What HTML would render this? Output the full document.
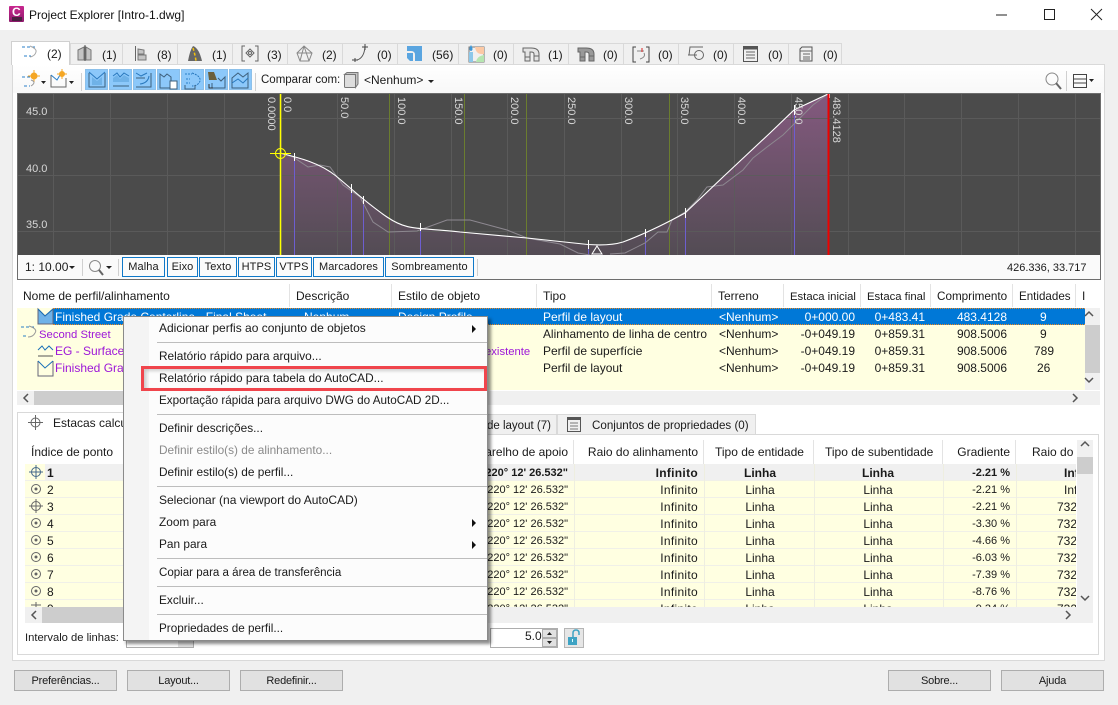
<!DOCTYPE html>
<html><head><meta charset="utf-8"><title>Project Explorer</title>
<style>
html,body{margin:0;padding:0}
body{width:1118px;height:705px;overflow:hidden;background:#f0f0f0;position:relative;font:12px "Liberation Sans",sans-serif;color:#1a1a1a}
.a{position:absolute}
.t{position:absolute;white-space:nowrap;line-height:16px}
.tab{position:absolute;top:43px;height:21px;background:#f0f0f0;border:1px solid #d9d9d9;border-bottom:none;box-sizing:border-box}
.tb{position:absolute;top:69px;width:23px;height:21px;background:#8cc8fa;border:1px solid #8cc0ea;box-sizing:border-box}
.bb{position:absolute;top:257px;height:20px;box-sizing:border-box;border:1px solid #0f78c8;text-align:center;line-height:19px;background:#fbfbfb;font-size:11px;letter-spacing:.1px}
.hs{position:absolute;width:1px;background:#e3e3e3}
.r{position:absolute;left:25px;width:1051px;height:16px;background:#ffffe1;border-bottom:1px solid #f0f0e8;overflow:hidden}
.r .t{top:1px}
.c0{left:22px}
.c1{right:508px;font-size:11px}
.c2{right:378px;letter-spacing:.3px}
.c3{left:693px;width:84px;text-align:center}
.c4{left:793px;width:120px;text-align:center}
.c5{right:66px;font-size:11px}
.c6{left:1039px}
.c7{left:1032px}
.vs{position:absolute;width:1px;background:#eeeee0;top:464px;height:143px}
.btn{position:absolute;top:670px;height:21px;width:103px;box-sizing:border-box;background:#e1e1e1;border:1px solid #adadad;text-align:center;line-height:21px;font-size:11px;letter-spacing:-.2px}
.m{position:absolute;left:35px;white-space:nowrap;line-height:16px;font-size:11.85px}
.sep{position:absolute;left:33px;width:330px;height:1px;background:#bdbdbd}
.rw{position:absolute;white-space:nowrap;line-height:16px}
.h1{font-size:11.3px}
</style></head><body>

<!-- title bar -->
<div class="a" style="left:0;top:0;width:1118px;height:30px;background:#fff"></div>
<div class="a" style="left:9px;top:6px;width:15px;height:16px;background:linear-gradient(#c8268e,#8d1a6c);border-radius:1px"></div>
<div class="t" style="left:12px;top:4px;color:#fff;font-weight:bold;font-size:12px">C</div>
<div class="a" style="left:12px;top:17px;width:10px;height:4px;background:#4a2040"></div>
<div class="t" style="left:29px;top:7px;font-size:12px;color:#111">Project Explorer [Intro-1.dwg]</div>
<svg class="a" style="left:990px;top:5px" width="120" height="20" fill="none" stroke="#222" stroke-width="1" shape-rendering="crispEdges">
<path d="M6 10H17"/><rect x="54.5" y="4.5" width="10" height="10"/><path d="M101 4L112 15M112 4L101 15" shape-rendering="auto"/></svg>

<!-- main panel -->
<div class="a" style="left:12px;top:64px;width:1093px;height:597px;box-sizing:border-box;background:#fff;border:1px solid #d9d9d9"></div>
<div class="a" style="left:13px;top:65px;width:1091px;height:28px;background:linear-gradient(#fff,#f8f8f8)"></div>

<!-- tabs -->
<div class="tab" style="left:70px;width:53px"></div><div class="tab" style="left:122px;width:56px"></div><div class="tab" style="left:177px;width:56px"></div><div class="tab" style="left:232px;width:56px"></div><div class="tab" style="left:287px;width:56px"></div><div class="tab" style="left:342px;width:56px"></div><div class="tab" style="left:397px;width:62px"></div><div class="tab" style="left:458px;width:56px"></div><div class="tab" style="left:513px;width:56px"></div><div class="tab" style="left:568px;width:56px"></div><div class="tab" style="left:623px;width:56px"></div><div class="tab" style="left:678px;width:56px"></div><div class="tab" style="left:733px;width:56px"></div><div class="tab" style="left:788px;width:54px"></div>
<div class="tab" style="left:11px;top:41px;width:59px;height:24px;background:#fff;border-color:#d0d0d0"></div>
<div class="t" style="left:47px;top:46px">(2)</div><div class="t" style="left:102px;top:47px">(1)</div><div class="t" style="left:157px;top:47px">(8)</div><div class="t" style="left:212px;top:47px">(1)</div><div class="t" style="left:267px;top:47px">(3)</div><div class="t" style="left:322px;top:47px">(2)</div><div class="t" style="left:377px;top:47px">(0)</div><div class="t" style="left:432px;top:47px">(56)</div><div class="t" style="left:493px;top:47px">(0)</div><div class="t" style="left:548px;top:47px">(1)</div><div class="t" style="left:603px;top:47px">(0)</div><div class="t" style="left:658px;top:47px">(0)</div><div class="t" style="left:713px;top:47px">(0)</div><div class="t" style="left:768px;top:47px">(0)</div><div class="t" style="left:823px;top:47px">(0)</div>

<svg class="a" style="left:0;top:40px" width="860" height="26" fill="none" stroke="#666" stroke-width="1">
<!-- 1 alignment -->
<path d="M22 7H36" stroke="#2a7fc8" stroke-dasharray="3 2"/><path d="M24 16H31" stroke="#2a7fc8" stroke-dasharray="3 2"/><path d="M30 6Q37 9 36 12Q35 16 30 17" stroke="#aaa"/>
<!-- 2 sites -->
<path d="M78 10L84 7V20H78ZM86 7L91 10V20H86Z" fill="#c4c4c4" stroke="#777"/><path d="M85 5V21" stroke="#555"/>
<!-- 3 -->
<path d="M135.500 6V21" stroke="#666"/><path d="M138 9L144 10V14H138ZM138 15H146V20H138Z" fill="#c4c4c4" stroke="#777"/>
<!-- 4 road -->
<path d="M188 21Q190 10 193 6Q199 8 202 21Z" fill="#666" stroke="none"/><path d="M193 8Q195 14 196 21" stroke="#f4c20d" stroke-dasharray="3 2" stroke-width="1.500"/>
<!-- 5 -->
<path d="M245 6H242V21H245M255 6H258V21H255"/><path d="M250 9L254 13L250 17L246 13Z"/><circle cx="250" cy="13" r="1.500"/>
<!-- 6 -->
<path d="M304 6L312 13L309 21H300L297 13ZM297 13H312M304 6L300 21M304 6L309 21" stroke="#888"/>
<!-- 7 -->
<path d="M357 20Q364 18 365 7" stroke="#555"/><path d="M352 20H358M355 18V22M362 7H368M365 4V10" stroke="#444"/>
<!-- 8 parcel -->
<path d="M407 6H422V21H415V15Q415 11 411 11H407Z" fill="#5aa5e0" stroke="none"/><path d="M407 13H413V21H410L407 18Z" fill="#5aa5e0" stroke="none"/>
<!-- 9 -->
<path d="M469 7H484V22H469Z" stroke="#777"/><path d="M475 7H484V14Q476 15 475 7Z" fill="#fcc9a5" stroke="none"/><path d="M476 22Q477 16 484 15V22Z" fill="#b6e6b0" stroke="none"/><path d="M469 12H473V22H469Z" fill="#8cc8ea" stroke="none"/><path d="M471 5Q468 10 471 11Q474 10 471 5Z" fill="#3c96d6" stroke="none"/>
<!-- 10 pipes -->
<path d="M523 8H531Q539 8 539 14V21H534V14Q534 12 531 12H530V21H525V12H523Z" fill="#e4e4e4"/><path d="M525 17H530M534 16H539"/>
<!-- 11 pipes dark -->
<path d="M578 8H586Q594 8 594 14V21H589V14Q589 12 586 12H585V21H580V12H578Z" fill="#999"/><path d="M580 17H585M589 16H594"/>
<!-- 12 -->
<path d="M636 7H633V22H636M646 7H649V22H646" stroke="#444"/><path d="M637 11H644" stroke="#888"/><path d="M642 8V12" stroke="#d22"/><path d="M644 13Q646 17 640 19" stroke="#888"/>
<!-- 13 -->
<path d="M689 15L690 7H703" stroke="#666"/><path d="M688 15H697" stroke="#666"/><circle cx="699" cy="15" r="4.500"/>
<!-- 14 -->
<rect x="743.500" y="6.500" width="14" height="15" stroke="#555"/><path d="M743 8H758" stroke="#555" stroke-width="3"/><path d="M746 12H755M746 15H755M746 18H755"/>
<!-- 15 -->
<path d="M800 9L802 7H812V21H800Z" stroke="#555"/><path d="M800 11H812M803 14H810M803 17H810M803 19H810"/>
</svg>

<!-- toolbar 1 -->
<div class="tb" style="left:85px"></div><div class="tb" style="left:109px"></div><div class="tb" style="left:133px"></div><div class="tb" style="left:157px"></div><div class="tb" style="left:181px"></div><div class="tb" style="left:205px"></div><div class="tb" style="left:229px"></div>
<svg class="a" style="left:0;top:66px" width="460" height="27" fill="none" stroke="#555">
<path d="M22 11H30M24 20H30" stroke="#2a7fc8" stroke-dasharray="3 2"/><circle cx="34" cy="10" r="3" fill="#f5a623" stroke="#f5a623"/><path d="M34 4V16M28 10H40" stroke="#f5a623"/><path d="M31 14Q37 16 31 20" stroke="#999"/>
<path d="M41 15H46L43.500 18Z" fill="#222" stroke="none"/>
<path d="M51 9V21H66V12" stroke="#666"/><path d="M51 9L57 14L60 9" stroke="#2a7fc8"/><circle cx="62" cy="8" r="2.500" fill="#f5a623" stroke="#f5a623"/><path d="M62 3V13M57 8H67" stroke="#f5a623"/>
<path d="M69 15H74L71.500 18Z" fill="#222" stroke="none"/>
<path d="M81.500 7V25M255.500 7V25" stroke="#d0d0d0"/>
<path d="M89 7V21H105V7" stroke="#3d5f7c"/><path d="M89 6L97 13L105 6" stroke="#2a79be"/><path d="M92 11L97 15L102 11V19H92Z" fill="#6fb2e8" stroke="none"/>
<path d="M113 10L117 7L120 11L124 7L129 10" stroke="#2a79be"/><path d="M113 12L117 9L120 13L124 9L129 12V16H113Z" fill="#6fb2e8" stroke="none"/><path d="M113 20H129" stroke="#3d5f7c"/>
<path d="M136 7L141 10L147 7" stroke="#2a79be"/><path d="M151 7V21H136" stroke="#3d5f7c"/><path d="M140 18Q148 17 149 10" stroke="#2a79be"/><path d="M136 12H145" stroke="#3d5f7c"/>
<path d="M160 8L164 11L167 8L171 11V22H160Z" stroke="#3d5f7c"/><path d="M170 15H177V23H170Z" fill="#fff" stroke="#3d5f7c"/>
<path d="M185 8H192M186 13H190M186 17H190" stroke="#2a7fc8" stroke-dasharray="2 1"/><path d="M192 7Q201 10 200 15Q198 20 192 20" stroke="#2a79be" stroke-dasharray="2 1"/><path d="M185 19V23H195V19" stroke="#3d5f7c"/>
<path d="M208 6H214L217 14H209Z" fill="#6b5f3c" stroke="none"/><path d="M218 12L221 15L225 11V22H212V17" stroke="#3d5f7c"/><path d="M209 18V22H213" stroke="#333"/>
<path d="M232 12L238 7L243 11L248 7V22H232Z" stroke="#3d5f7c"/><path d="M232 17L238 13L243 17L248 12" stroke="#2a79be"/>
<rect x="344.500" y="8.500" width="11" height="13" rx="1" fill="#ddd" stroke="#777"/><path d="M347 6.500H358V18L355.500 21.500V8.500H344.500Z" fill="#c4c4c4" stroke="#777"/>
<path d="M428 14H434L431 17Z" fill="#222" stroke="none"/>
</svg>
<div class="t" style="left:261px;top:72px;font-size:11.500px">Comparar com:</div>
<div class="t" style="left:364px;top:72px">&lt;Nenhum&gt;</div>
<svg class="a" style="left:1040px;top:70px" width="60" height="22" fill="none" stroke="#777">
<circle cx="12" cy="9" r="6" stroke="#888"/><path d="M16 13L21 19" stroke="#666" stroke-width="2"/><path d="M26.500 1V21" stroke="#d0d0d0"/>
<rect x="33.500" y="4.500" width="13" height="13" stroke="#444"/><path d="M33 9H47M33 13H47" stroke="#444"/><path d="M49 9H54L51.500 12Z" fill="#222" stroke="none"/></svg>

<!-- graph -->
<div class="a" style="left:17px;top:93px;width:1084px;height:187px;box-sizing:border-box;border:1px solid #6d6d6d;background:#fafafa"></div>
<svg class="a" style="left:18px;top:94px" width="1082" height="161" viewBox="18 94 1082 161">
<defs><linearGradient id="g" gradientUnits="userSpaceOnUse" x1="0" y1="94" x2="0" y2="255"><stop offset="0" stop-color="#84597f"/><stop offset="1" stop-color="#534c54"/></linearGradient></defs>
<rect x="18" y="94" width="1082" height="161" fill="#4b4b4b"/>
<path fill="url(#g)" d="M280 153C300 158 320 163 336 176S365 202 387 217S420 227 460 232L527 238L588 244.500Q610 246 623 242Q650 232 685 213L723 177L770 133L794 110L828 94V255H280Z"/>
<g stroke="#5c5c5c" stroke-width="1" shape-rendering="crispEdges" fill="none" opacity=".9">
<path d="M53.500 94V255M110.500 94V255M167.500 94V255M224.500 94V255M281.500 94V255M337.500 94V255M394.500 94V255M451.500 94V255M507.500 94V255M564.500 94V255M621.500 94V255M677.500 94V255M734.500 94V255M791.500 94V255M848.500 94V255M904.500 94V255M961.500 94V255M1018.500 94V255M1075.500 94V255"/>
<path d="M18 118.500H1100M18 175.500H1100M18 231.500H1100"/></g>
<g stroke="#6b7d2f" stroke-width="1" shape-rendering="crispEdges"><path d="M389.500 94V255M464.500 94V255M526.500 94V255M669.500 94V255"/></g>
<g stroke="#6d5ed0" stroke-width="1" shape-rendering="crispEdges"><path d="M294.500 157V255M351.500 188V255M363.500 200V255M420.500 227V255M588.500 244V255M645.500 233V255M685.500 213V255M794.500 110V255"/></g>
<path fill="none" stroke="#8d8890" d="M280 153L293 157L308 167L320 165L330 167L343 185L360 197L373 222L388 232L417 231L447 220L470 220L507 230L527 238L560 244L578 253L590 255M610 254L625 253L645 243L658 232L667 232L672 220L685 212L697 200L707 187L723 185L743 170L753 158L767 147L783 135L795 123L813 105L828 94"/>
<path fill="none" stroke="#fff" stroke-width="1.100" d="M280 153C300 158 320 163 336 176S365 202 387 217S420 227 460 232L527 238L588 244.500Q610 246 623 242Q650 232 685 213L723 177L770 133L794 110L828 94"/>
<path stroke="#fff" fill="none" shape-rendering="crispEdges" d="M294.500 153V161M351.500 184V193M363.500 196V204M420.500 223V231M588.500 240V249M645.500 229V237M685.500 208V218M794.500 105V115M829.500 94V98"/>
<path d="M597 246L602 254H592Z" fill="none" stroke="#fff"/>
<path d="M280.500 94V255" stroke="#ffff00" stroke-width="1.500"/>
<path d="M828.500 94V255" stroke="#f00000" stroke-width="2"/>
<circle cx="280.500" cy="153.500" r="5" fill="none" stroke="#ffff00"/><path d="M270 153.500H291" stroke="#ffff00"/>
<g fill="#d8d8d8" font-family="'Liberation Sans',sans-serif" font-size="11">
<text x="26" y="115">45.0</text><text x="26" y="172">40.0</text><text x="26" y="228">35.0</text>
<text transform="translate(268,97) rotate(90)">0.0000</text>
<text transform="translate(284,97) rotate(90)">0.0</text>
<text transform="translate(341,97) rotate(90)">50.0</text>
<text transform="translate(398,97) rotate(90)">100.0</text>
<text transform="translate(455,97) rotate(90)">150.0</text>
<text transform="translate(511,97) rotate(90)">200.0</text>
<text transform="translate(568,97) rotate(90)">250.0</text>
<text transform="translate(625,97) rotate(90)">300.0</text>
<text transform="translate(681,97) rotate(90)">350.0</text>
<text transform="translate(738,97) rotate(90)">400.0</text>
<text transform="translate(795,97) rotate(90)">450.0</text>
<text transform="translate(833,97) rotate(90)">483.4128</text>
</g></svg>

<!-- scale toolbar -->
<div class="t" style="left:25px;top:259px">1: 10.00</div>
<svg class="a" style="left:60px;top:256px" width="70" height="23" fill="none" stroke="#888">
<path d="M9 10H15L12 13Z" fill="#222" stroke="none"/><path d="M22.500 3V20M58.500 3V20" stroke="#d0d0d0"/>
<circle cx="35" cy="10" r="5.500"/><path d="M39 14L43 19" stroke="#666" stroke-width="2"/><path d="M46 10H52L49 13Z" fill="#222" stroke="none"/></svg>
<div class="bb" style="left:122px;width:43px">Malha</div><div class="bb" style="left:167px;width:31px">Eixo</div><div class="bb" style="left:199px;width:38px">Texto</div><div class="bb" style="left:238px;width:37px">HTPS</div><div class="bb" style="left:276px;width:36px">VTPS</div><div class="bb" style="left:313px;width:71px">Marcadores</div><div class="bb" style="left:385px;width:89px">Sombreamento</div>
<div class="a" style="left:477px;top:259px;width:1px;height:17px;background:#d0d0d0"></div>
<div class="t" style="left:1007px;top:260px;font-size:11px">426.336, 33.717</div>

<!-- table 1 header -->
<div class="t" style="left:23px;top:288px">Nome de perfil/alinhamento</div>
<div class="t" style="left:296px;top:288px">Descrição</div>
<div class="t" style="left:398px;top:288px">Estilo de objeto</div>
<div class="t" style="left:543px;top:288px">Tipo</div>
<div class="t" style="left:718px;top:288px">Terreno</div>
<div class="t h1" style="left:790px;top:289px">Estaca inicial</div>
<div class="t h1" style="left:867px;top:289px">Estaca final</div>
<div class="t" style="left:937px;top:289px;font-size:11.7px">Comprimento</div>
<div class="t" style="left:1019px;top:289px;font-size:11.6px">Entidades</div>
<div class="t" style="left:1082px;top:288px">I</div>
<div class="hs" style="left:289px;top:284px;height:23px"></div><div class="hs" style="left:391px;top:284px;height:23px"></div><div class="hs" style="left:536px;top:284px;height:23px"></div><div class="hs" style="left:711px;top:284px;height:23px"></div><div class="hs" style="left:783px;top:284px;height:23px"></div><div class="hs" style="left:860px;top:284px;height:23px"></div><div class="hs" style="left:930px;top:284px;height:23px"></div><div class="hs" style="left:1012px;top:284px;height:23px"></div><div class="hs" style="left:1075px;top:284px;height:23px"></div>

<div class="a" style="left:17px;top:308px;width:1068px;height:82px;background:#ffffe1"></div>
<div class="a" style="left:53px;top:308px;width:1032px;height:17px;box-sizing:border-box;background:#0078d7;border-top:1px dotted #f08a20;border-bottom:1px dotted #f08a20"></div>
<svg class="a" style="left:20px;top:306px" width="40" height="76" fill="none">
<path d="M18 3V18H33V3L25 10Z" fill="#6fb2e8" stroke="#667"/><path d="M18 3L25 10L33 3" stroke="#1a70b8"/>
<path d="M1 21H15M3 30H8" stroke="#2a7fc8" stroke-dasharray="3 2"/><path d="M9 20Q18 23 15 27Q13 31 8 31" stroke="#999"/>
<path d="M18 44L22 40L25 44L29 40L33 44" stroke="#1a70b8"/><path d="M18 50H33" stroke="#555"/>
<path d="M18 55V70H33V55" stroke="#667"/><path d="M18 55L25 62L33 55" stroke="#1a70b8"/>
</svg>
<div class="rw" style="left:55px;top:309px;color:#fff">Finished Grade Centerline - Final Sheet</div>
<div class="rw" style="left:304px;top:309px;color:#fff">Nenhum</div>
<div class="rw" style="left:398px;top:309px;color:#fff">Design Profile</div>
<div class="rw" style="left:543px;top:309px;color:#fff">Perfil de layout</div>
<div class="rw" style="left:719px;top:309px;color:#fff">&lt;Nenhum&gt;</div>
<div class="rw" style="right:263px;top:309px;color:#fff">0+000.00</div>
<div class="rw" style="right:193px;top:309px;color:#fff">0+483.41</div>
<div class="rw" style="right:111px;top:309px;color:#fff">483.4128</div>
<div class="rw" style="left:1040px;top:309px;color:#fff">9</div>

<div class="rw" style="left:39px;top:327px;color:#9d17d8;font-size:11.3px">Second Street</div>
<div class="rw" style="left:543px;top:326px;font-size:11.9px">Alinhamento de linha de centro</div>
<div class="rw" style="left:719px;top:326px">&lt;Nenhum&gt;</div>
<div class="rw" style="right:263px;top:326px">-0+049.19</div>
<div class="rw" style="right:193px;top:326px">0+859.31</div>
<div class="rw" style="right:111px;top:326px">908.5006</div>
<div class="rw" style="left:1040px;top:326px">9</div>

<div class="rw" style="left:55px;top:343px;color:#9d17d8">EG - Surface (1)</div>
<div class="rw" style="left:485px;top:344px;color:#9d17d8;font-size:11.3px">existente</div>
<div class="rw" style="left:543px;top:343px">Perfil de superfície</div>
<div class="rw" style="left:719px;top:343px">&lt;Nenhum&gt;</div>
<div class="rw" style="right:263px;top:343px">-0+049.19</div>
<div class="rw" style="right:193px;top:343px">0+859.31</div>
<div class="rw" style="right:111px;top:343px">908.5006</div>
<div class="rw" style="left:1034px;top:343px">789</div>

<div class="rw" style="left:55px;top:360px;color:#9d17d8">Finished Grade</div>
<div class="rw" style="left:543px;top:360px">Perfil de layout</div>
<div class="rw" style="left:719px;top:360px">&lt;Nenhum&gt;</div>
<div class="rw" style="right:263px;top:360px">-0+049.19</div>
<div class="rw" style="right:193px;top:360px">0+859.31</div>
<div class="rw" style="right:111px;top:360px">908.5006</div>
<div class="rw" style="left:1037px;top:360px">26</div>

<!-- scrollbars table 1 -->
<div class="a" style="left:1085px;top:308px;width:15px;height:82px;background:#f0f0f0"></div>
<div class="a" style="left:1085px;top:325px;width:15px;height:48px;background:#cdcdcd"></div>
<div class="a" style="left:17px;top:391px;width:1083px;height:14px;background:#f0f0f0"></div>
<div class="a" style="left:34px;top:391px;width:300px;height:14px;background:#cdcdcd"></div>
<svg class="a" style="left:17px;top:310px" width="1083" height="96" fill="none" stroke="#555" stroke-width="1.500">
<path d="M1068 6L1072 2L1076 6M1068 68L1072 72L1076 68M11 84L7 88L11 92M1056 84L1060 88L1056 92"/></svg>

<!-- lower panel -->
<div class="a" style="left:17px;top:434px;width:1082px;height:221px;box-sizing:border-box;background:#fff;border:1px solid #d9d9d9"></div>
<div class="a" style="left:17px;top:412px;width:110px;height:23px;background:#fff;box-sizing:border-box;border:1px solid #d9d9d9;border-bottom:none"></div>
<div class="a" style="left:400px;top:414px;width:157px;height:20px;background:#f0f0f0;box-sizing:border-box;border:1px solid #d9d9d9;border-bottom:none"></div>
<div class="a" style="left:557px;top:414px;width:199px;height:20px;background:#f0f0f0;box-sizing:border-box;border:1px solid #d9d9d9;border-bottom:none"></div>
<svg class="a" style="left:25px;top:413px" width="20" height="20" fill="none" stroke="#666"><circle cx="10.500" cy="9.500" r="4.500"/><path d="M10.500 2V17M3 9.500H18"/></svg>
<div class="t" style="left:53px;top:415px">Estacas calculadas</div>
<div class="t" style="left:487px;top:418px;font-size:11.5px">de layout (7)</div>
<svg class="a" style="left:566px;top:416px" width="16" height="16" fill="none" stroke="#555"><rect x="1.500" y="1.500" width="13" height="14"/><path d="M1 3H15" stroke-width="2"/><path d="M4 7H12M4 10H12M4 13H12" stroke="#777"/></svg>
<div class="t" style="left:592px;top:418px;font-size:11.6px">Conjuntos de propriedades (0)</div>

<!-- lower table header -->
<div class="t" style="left:31px;top:444px">Índice de ponto</div>
<div class="t" style="right:550px;top:444px">Aparelho de apoio</div>
<div class="t" style="right:420px;top:444px">Raio do alinhamento</div>
<div class="t" style="left:715px;top:444px">Tipo de entidade</div>
<div class="t" style="left:825px;top:444px">Tipo de subentidade</div>
<div class="t" style="right:108px;top:444px">Gradiente</div>
<div class="a" style="left:1020px;top:444px;width:56px;height:16px;overflow:hidden;line-height:16px;white-space:nowrap;padding-left:12px;box-sizing:border-box">Raio do perfil</div>
<div class="hs" style="left:573px;top:440px;height:24px"></div><div class="hs" style="left:703px;top:440px;height:24px"></div><div class="hs" style="left:813px;top:440px;height:24px"></div><div class="hs" style="left:942px;top:440px;height:24px"></div><div class="hs" style="left:1015px;top:440px;height:24px"></div>

<!-- lower rows -->
<div class="r" style="top:464px;background:#f0f0f0;font-weight:bold;height:16px"><div class="a" style="left:0;top:0;width:20px;height:17px;background:#ffffe1"></div><div class="t c0">1</div><div class="t c1">220° 12' 26.532"</div><div class="t c2">Infinito</div><div class="t c3">Linha</div><div class="t c4">Linha</div><div class="t c5">-2.21 %</div><div class="t c6">Infinito</div></div>
<div class="r" style="top:481px"><div class="t c0">2</div><div class="t c1">220° 12' 26.532"</div><div class="t c2">Infinito</div><div class="t c3">Linha</div><div class="t c4">Linha</div><div class="t c5">-2.21 %</div><div class="t c6">Infinito</div></div>
<div class="r" style="top:498px"><div class="t c0">3</div><div class="t c1">220° 12' 26.532"</div><div class="t c2">Infinito</div><div class="t c3">Linha</div><div class="t c4">Linha</div><div class="t c5">-2.21 %</div><div class="t c7">732.000</div></div>
<div class="r" style="top:515px"><div class="t c0">4</div><div class="t c1">220° 12' 26.532"</div><div class="t c2">Infinito</div><div class="t c3">Linha</div><div class="t c4">Linha</div><div class="t c5">-3.30 %</div><div class="t c7">732.000</div></div>
<div class="r" style="top:532px"><div class="t c0">5</div><div class="t c1">220° 12' 26.532"</div><div class="t c2">Infinito</div><div class="t c3">Linha</div><div class="t c4">Linha</div><div class="t c5">-4.66 %</div><div class="t c7">732.000</div></div>
<div class="r" style="top:549px"><div class="t c0">6</div><div class="t c1">220° 12' 26.532"</div><div class="t c2">Infinito</div><div class="t c3">Linha</div><div class="t c4">Linha</div><div class="t c5">-6.03 %</div><div class="t c7">732.000</div></div>
<div class="r" style="top:566px"><div class="t c0">7</div><div class="t c1">220° 12' 26.532"</div><div class="t c2">Infinito</div><div class="t c3">Linha</div><div class="t c4">Linha</div><div class="t c5">-7.39 %</div><div class="t c7">732.000</div></div>
<div class="r" style="top:583px"><div class="t c0">8</div><div class="t c1">220° 12' 26.532"</div><div class="t c2">Infinito</div><div class="t c3">Linha</div><div class="t c4">Linha</div><div class="t c5">-8.76 %</div><div class="t c7">732.000</div></div>
<div class="r" style="top:600px;height:7px;border:0"><div class="t c0">9</div><div class="t c1">220° 12' 26.532"</div><div class="t c2">Infinito</div><div class="t c3">Linha</div><div class="t c4">Linha</div><div class="t c5">-9.34 %</div><div class="t c7">732.000</div></div>
<div class="vs" style="left:574px"></div><div class="vs" style="left:704px"></div><div class="vs" style="left:814px"></div><div class="vs" style="left:943px"></div><div class="vs" style="left:1016px"></div>

<svg class="a" style="left:25px;top:464px" width="22" height="143" fill="none" stroke="#666">
<g stroke="#44688a"><circle cx="11" cy="8" r="4.500"/><path d="M11 1V15M4 8H18"/></g>
<circle cx="11" cy="25" r="4.500"/><circle cx="11" cy="25" r="1" fill="#555"/>
<circle cx="11" cy="42" r="4.500"/><path d="M11 35V49M4 42H18"/>
<circle cx="11" cy="59" r="4.500"/><circle cx="11" cy="59" r="1" fill="#555"/>
<circle cx="11" cy="76" r="4.500"/><circle cx="11" cy="76" r="1" fill="#555"/>
<circle cx="11" cy="93" r="4.500"/><circle cx="11" cy="93" r="1" fill="#555"/>
<circle cx="11" cy="110" r="4.500"/><circle cx="11" cy="110" r="1" fill="#555"/>
<circle cx="11" cy="127" r="4.500"/><circle cx="11" cy="127" r="1" fill="#555"/>
<path d="M11 138V143M6 141H16"/>
</svg>

<!-- lower scrollbars -->
<div class="a" style="left:1077px;top:440px;width:16px;height:167px;background:#f0f0f0"></div>
<div class="a" style="left:1077px;top:457px;width:16px;height:17px;background:#cdcdcd"></div>
<div class="a" style="left:25px;top:607px;width:1068px;height:16px;background:#f0f0f0"></div>
<div class="a" style="left:42px;top:607px;width:400px;height:16px;background:#cdcdcd"></div>
<svg class="a" style="left:25px;top:440px" width="1068" height="184" fill="none" stroke="#555" stroke-width="1.500">
<path d="M1056 6L1060 2L1064 6M1056 156L1060 160L1064 156M11 171L7 175L11 179M1041 171L1045 175L1041 179"/></svg>

<!-- bottom controls -->
<div class="t" style="left:25px;top:630px;font-size:11.2px">Intervalo de linhas:</div>
<div class="a" style="left:126px;top:628px;width:68px;height:20px;box-sizing:border-box;border:1px solid #adadad;background:#fff"></div>
<div class="a" style="left:178px;top:640px;width:15px;height:7px;background:#e1e1e1"></div>
<div class="a" style="left:490px;top:628px;width:68px;height:20px;box-sizing:border-box;border:1px solid #adadad;background:#fff"></div>
<div class="t" style="left:525px;top:628px">5.0</div>
<div class="a" style="left:542px;top:629px;width:15px;height:9px;background:#e1e1e1;border:1px solid #adadad;box-sizing:border-box"></div>
<div class="a" style="left:542px;top:638px;width:15px;height:9px;background:#e1e1e1;border:1px solid #adadad;box-sizing:border-box"></div>
<svg class="a" style="left:542px;top:629px" width="16" height="18"><path d="M5 6L7.500 3L10 6ZM5 12H10L7.500 15Z" fill="#222"/></svg>
<div class="a" style="left:564px;top:628px;width:20px;height:20px;box-sizing:border-box;border:1px solid #b5b5b5;background:#e6e6e6"></div>
<svg class="a" style="left:564px;top:628px" width="20" height="20" fill="none"><rect x="4" y="9" width="9" height="8" fill="#3ea3c4"/><path d="M9 9V5Q9 2 12 2Q15 2 15 5V7" stroke="#3ea3c4" stroke-width="1.500"/><rect x="8" y="11" width="1" height="3" fill="#dff"/></svg>

<div class="btn" style="left:14px">Preferências...</div><div class="btn" style="left:127px">Layout...</div><div class="btn" style="left:240px">Redefinir...</div><div class="btn" style="left:888px">Sobre...</div><div class="btn" style="left:1001px">Ajuda</div>

<!-- context menu -->
<div class="a" style="left:123px;top:316px;width:365px;height:325px;box-sizing:border-box;background:#fcfcfc;border:1px solid #8a8a8a;box-shadow:3px 3px 3px rgba(0,0,0,.45);overflow:visible">
<div class="a" style="left:0;top:0;width:25px;height:323px;background:#f4f4f4"></div>
<div class="m" style="top:3px;font-size:12px">Adicionar perfis ao conjunto de objetos</div>
<svg class="a" style="left:347px;top:7px" width="6" height="10"><path d="M1 1L5 5L1 9Z" fill="#111"/></svg>
<div class="sep" style="top:25px"></div>
<div class="m" style="top:31px">Relatório rápido para arquivo...</div>
<div class="m" style="top:53px">Relatório rápido para tabela do AutoCAD...</div>
<div class="m" style="top:76px;font-size:11.7px">Exportação rápida para arquivo DWG do AutoCAD 2D...</div>
<div class="sep" style="top:97px"></div>
<div class="m" style="top:103px">Definir descrições...</div>
<div class="m" style="top:125px;color:#8a8a8a">Definir estilo(s) de alinhamento...</div>
<div class="m" style="top:147px">Definir estilo(s) de perfil...</div>
<div class="sep" style="top:169px"></div>
<div class="m" style="top:175px;font-size:12px">Selecionar (na viewport do AutoCAD)</div>
<div class="m" style="top:197px">Zoom para</div>
<svg class="a" style="left:347px;top:201px" width="6" height="10"><path d="M1 1L5 5L1 9Z" fill="#111"/></svg>
<div class="m" style="top:219px">Pan para</div>
<svg class="a" style="left:347px;top:223px" width="6" height="10"><path d="M1 1L5 5L1 9Z" fill="#111"/></svg>
<div class="sep" style="top:241px"></div>
<div class="m" style="top:248px;font-size:11.55px">Copiar para a área de transferência</div>
<div class="sep" style="top:269px"></div>
<div class="m" style="top:275px">Excluir...</div>
<div class="sep" style="top:297px"></div>
<div class="m" style="top:304px;font-size:11.7px">Propriedades de perfil...</div>
</div>
<!-- red highlight -->
<div class="a" style="left:141px;top:366px;width:346px;height:25px;box-sizing:border-box;border:3px solid #f0454c;box-shadow:inset 2px 2px 3px rgba(0,0,0,.18)"></div>
</body></html>
